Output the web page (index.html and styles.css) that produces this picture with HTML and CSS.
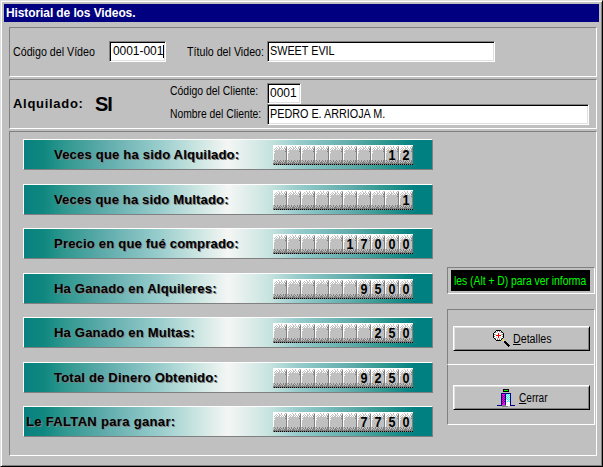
FILE: index.html
```html
<!DOCTYPE html>
<html lang="es">
<head>
<meta charset="utf-8">
<title>Historial de los Videos.</title>
<link rel="stylesheet" href="styles.css">
</head>
<body>
<svg width="0" height="0" class="defs" aria-hidden="true">
  <defs>
    <pattern id="cell" width="14" height="20" patternUnits="userSpaceOnUse">
      <rect width="14" height="20" fill="#c0c0c0"/>
      <path fill="#fff" d="M0 0h14v1H0zM0 1h5v1H0zM6 1h2v1H6zM9 1h3v1H9zM0 2h3v1H0zM4 2h2v1H4zM7 2h1v1H7zM9 2h2v1H9zM12 2h1v1h-1zM0 3h2v1H0zM3 3h1v1H3zM5 3h1v1H5zM8 3h1v1H8zM10 3h1v1h-1zM0 4h1v1H0zM2 4h1v1H2zM4 4h1v1H4zM7 4h1v1H7zM9 4h1v1H9zM11 4h1v1h-1zM0 5h2v1H0zM0 6h1v9H0zM1 7h1v1H1z"/>
      <path fill="#808080" d="M13 2h1v17h-1zM12 4h1v1h-1zM12 6h1v1h-1zM1 15h1v1H1zM4 15h1v1H4zM7 15h1v1H7zM10 15h1v1h-1zM2 16h1v1H2zM4 16h1v1H4zM6 16h1v1H6zM8 16h1v1H8zM10 16h1v1h-1zM12 15h1v2h-1zM1 17h1v1H1zM3 17h1v1H3zM5 17h3v1H5zM9 17h1v1H9zM11 17h2v1h-2zM0 18h14v2H0z"/>
      <path fill="#000" d="M1 19h1v1H1zM3 19h1v1H3zM5 19h1v1H5zM7 19h1v1H7zM9 19h1v1H9zM11 19h1v1h-1zM13 19h1v1h-1z"/>
    </pattern>
  </defs>
</svg>
<main class="window">
  <header class="titlebar"><span>Historial de los Videos.</span></header>
  <section class="panel video">
    <label class="t-video"><span>Código del Vídeo</span></label>
    <div class="field f-video">0001-001<i class="caret"></i></div>
    <label class="t-title"><span>Título del Video:</span></label>
    <div class="field f-title"><span>SWEET EVIL</span></div>
  </section>
  <section class="panel client">
    <div class="rented">Alquilado:</div>
    <div class="yes">SI</div>
    <div class="client-grid">
      <label class="t-code"><span>Código del Cliente:</span></label>
      <div class="field f-code">0001</div>
      <label class="t-name"><span>Nombre del Cliente:</span></label>
      <div class="field f-name"><span>PEDRO E. ARRIOJA M.</span></div>
    </div>
  </section>
  <section class="panel stats">
    <div class="bars">
      <div class="bar"><span class="l1">Veces que ha sido Alquilado:</span><div class="odo"><svg><rect width="140" height="20" fill="url(#cell)"/></svg><b>1</b><b>2</b></div></div>
      <div class="bar"><span class="l2">Veces que ha sido Multado:</span><div class="odo"><svg><rect width="140" height="20" fill="url(#cell)"/></svg><b>1</b></div></div>
      <div class="bar"><span class="l3">Precio en que fué comprado:</span><div class="odo"><svg><rect width="140" height="20" fill="url(#cell)"/></svg><b>1</b><b>7</b><b>0</b><b>0</b><b>0</b></div></div>
      <div class="bar"><span class="l4">Ha Ganado en Alquileres:</span><div class="odo"><svg><rect width="140" height="20" fill="url(#cell)"/></svg><b>9</b><b>5</b><b>0</b><b>0</b></div></div>
      <div class="bar"><span class="l5">Ha Ganado en Multas:</span><div class="odo"><svg><rect width="140" height="20" fill="url(#cell)"/></svg><b>2</b><b>5</b><b>0</b></div></div>
      <div class="bar"><span class="l6">Total de Dinero Obtenido:</span><div class="odo"><svg><rect width="140" height="20" fill="url(#cell)"/></svg><b>9</b><b>2</b><b>5</b><b>0</b></div></div>
      <div class="bar missing"><span class="l7">Le FALTAN para ganar:</span><div class="odo"><svg><rect width="140" height="20" fill="url(#cell)"/></svg><b>7</b><b>7</b><b>5</b><b>0</b></div></div>
    </div>
    <aside class="side">
      <div class="ticker"><div class="screen"><span>les (Alt + D) para ver informa</span></div></div>
      <div class="box first">
        <button class="btn details">
          <svg width="17" height="17" viewBox="0 0 17 17" shape-rendering="crispEdges">
            <path fill="#fff" d="M3 1h5v1h1v1h1v5H9v1H8v1H3V9H2V8H1V3h1V2h1z"/>
            <path fill="#c0c0c0" d="M3 2h1v1H3zM7 2h1v1H7zM2 4h1v1H2zM8 4h1v1H8zM3 7h1v1H3zM7 7h1v1H7zM4 8h1v1H4zM6 8h1v1H6z"/>
            <path fill="#808080" d="M2 2h1v1H2zM8 2h1v1H8zM1 4h1v1H1zM9 4h1v1H9zM1 6h1v1H1zM9 6h1v1H9zM2 8h1v1H2zM8 8h1v1H8zM4 1h1v1H4zM6 1h1v1H6zM4 9h1v1H4zM6 9h1v1H6z"/>
            <path fill="#000" d="M3 0h5v1H3zM2 1h1v1H2zM8 1h1v1H8zM1 2h1v1H1zM9 2h1v1H9zM0 3h1v5H0zM10 3h1v5h-1zM1 8h1v1H1zM9 8h1v1H9zM2 9h1v1H2zM8 9h1v1H8zM3 10h5v1H3zM11 11h2v1h1v1h1v1h1v1h1v1h-1v1h-1v-1h-1v-1h-1v-1h-1v-1h-1z"/>
            <path fill="#f00" d="M5 3h1v2h2v1H6v2H5V6H3V5h2z"/>
            <path fill="#ff0" d="M9 9h1v1h1v1h-1v-1H9z"/>
          </svg>
          <span><u>D</u>etalles</span>
        </button>
      </div>
      <div class="box second">
        <button class="btn close">
          <svg width="18" height="18" viewBox="0 0 18 18" shape-rendering="crispEdges">
            <path fill="#000" d="M6 0h6v3H6z"/><path fill="#0f0" d="M7 1h4v1H7z"/>
            <path fill="#808080" d="M5 16h6v2H5z"/>
            <path fill="#fff" d="M9 5h4v12H9z"/>
            <path fill="#0ff" d="M9 5h1v1H9zM11 5h1v1h-1zM10 6h1v1h-1zM12 6h1v1h-1zM9 7h1v1H9zM11 7h1v1h-1zM10 8h1v1h-1zM12 8h1v1h-1zM9 9h1v1H9zM11 9h1v1h-1zM10 10h1v1h-1zM12 10h1v1h-1zM11 11h1v1h-1zM10 12h1v1h-1zM12 12h1v1h-1z"/>
            <path fill="#f0f" d="M5 5h3v11H5z"/><path fill="#800080" d="M5 6h1v1H5zM7 6h1v1H7zM6 7h1v1H6zM5 8h1v1H5zM7 8h1v1H7zM6 9h1v1H6zM5 10h1v1H5zM7 10h1v1H7zM6 11h1v1H6zM5 12h1v1H5zM7 12h1v1H7zM6 13h1v1H6zM5 14h1v1H5z"/>
            <path fill="#000080" d="M4 4h10v12h4v1h-5V5H9v11H8V5H5v12H0v-1h4z"/>
          </svg>
          <span><u>C</u>errar</span>
        </button>
      </div>
    </aside>
  </section>
</main>
</body>
</html>
```
FILE: styles.css
```css
* { box-sizing: border-box; }
body { margin: 0; background: #c0c0c0; font: 12px/14px "Liberation Sans", Arial, sans-serif; color: #000; overflow: hidden; }
.defs { display: block; height: 0; }
.window {
  width: 603px; height: 467px; padding: 3px;
  background: #c0c0c0; border: 1px solid; border-color: #dfdfdf #000 #000 #dfdfdf;
  box-shadow: inset 1px 1px #fff, inset -1px -1px #808080;
}
.titlebar {
  width: 595px; height: 18px; padding: 0 2px; background: #000080; color: #fff;
  font-weight: bold; font-size: 12px; line-height: 18px; white-space: nowrap;
}
.titlebar span { letter-spacing: -0.1px; }
.panel {
  width: 588px; margin-left: 5px;
  border: 1px solid; border-color: #808080 #fff #fff #808080;
}
.video { display: flex; height: 50px; margin-top: 5px; padding-top: 13px; }
.client { display: flex; height: 50px; margin-top: 2px; }
label, .field, .rented, .yes, .bar span, .btn, .screen { white-space: nowrap; }
label span, .field span { display: inline-block; transform-origin: 0 50%; transform: scaleX(.89); }
.field {
  position: relative; height: 21px; padding: 2px 0 0 2px; background: #fff;
  border: 1px solid; border-color: #808080 #fff #fff #808080;
  box-shadow: inset 1px 1px #000, inset -1px -1px #dfdfdf;
  font-size: 12px; line-height: 15px;
}
.caret { display: inline-block; width: 1px; height: 13px; background: #000; vertical-align: -3px; }
.t-video { width: 99px; padding: 4px 0 0 3px; }
.f-video { width: 57px; padding-left: 3px; letter-spacing: -0.05px; }
.t-title { width: 101px; padding: 4px 0 0 21px; }
.f-title { width: 228px; }
.field.f-title span, .field.f-name span { transform: scaleX(.9); }
.rented { width: 85px; padding: 16px 0 0 3px; font-weight: bold; font-size: 13px; line-height: 16px; letter-spacing: .7px; }
.yes { width: 74px; font-weight: bold; font-size: 20px; line-height: 49px; letter-spacing: -1px; }
.client-grid { display: grid; grid-template-columns: 98px 322px; grid-template-rows: 21px 21px; padding-top: 3px; }
.f-code { width: 34px; }
.t-code { padding: 1px 0 0 1px; }
.t-name { padding: 3px 0 0 1px; }
.t-code span { transform: scaleX(.87); }
.t-name span { transform: scaleX(.86); }
.stats { display: flex; height: 325px; margin-top: 2px; padding: 7px 0 0 13px; }
.bars { display: grid; width: 424px; grid-template-rows: 45px 44px 45px 44px 45px 44px 31px; align-content: start; }
.bar {
  display: flex; width: 410px; height: 31px; padding: 5px 0 0 30px;
  border: 1px solid; border-color: #fff #808080 #808080 #fff;
  background: linear-gradient(90deg, #088080, #108880 5%, #309890 10%, #60acac 20%, #98cccc 33%, #c8e4e0 42%, #f4f6f4 50%, #c8e4e0 60%, #98cccc 67%, #60acac 80%, #309890 88%, #008080 96%);
}
.bar span { width: 219px; font-weight: bold; font-size: 13px; line-height: 19px; letter-spacing: .21px; text-shadow: 1px 1px #808080; }
.bar .l2 { letter-spacing: .16px; }
.bar .l7 { letter-spacing: .33px; }
.bar.missing { padding-left: 2px; }
.bar.missing span { width: 247px; }
.odo { position: relative; display: flex; justify-content: flex-end; width: 140px; height: 20px; }
.odo svg { position: absolute; inset: 0; width: 140px; height: 20px; }
.odo b { position: relative; width: 14px; text-align: center; font-size: 14px; line-height: 20px; transform: scaleX(.9); }
.side { width: 148px; padding-top: 128px; }
.ticker { height: 27px; padding: 2px 3px; border: 1px solid; border-color: #808080 #fff #fff #808080; }
.screen { width: 139px; height: 21px; padding-left: 3px; background: #000; color: #0f0; line-height: 22px; }
.screen span { display: inline-block; transform-origin: 0 50%; transform: scaleX(.86); }
.box { border: 1px solid; border-color: #808080 #fff #fff #808080; }
.first { height: 56px; margin-top: 15px; padding: 16px 0 0 5px; }
.second { height: 60px; border-top: 0; padding: 20px 0 0 5px; }
.btn {
  display: flex; align-items: center; width: 137px; height: 25px; margin: 0; padding: 0;
  background: #c0c0c0; border: 1px solid; border-color: #fff #000 #000 #fff;
  box-shadow: inset 1px 1px #dfdfdf, inset -1px -1px #808080;
  font: 12px/14px "Liberation Sans", Arial, sans-serif; color: #000;
}
.btn svg { margin-left: 39px; }
.btn span { margin-left: 3px; transform-origin: 0 50%; transform: scaleX(.89); }
.close svg { margin-left: 43px; }
.close span { margin-left: 4px; transform: scaleX(.84); }
```
